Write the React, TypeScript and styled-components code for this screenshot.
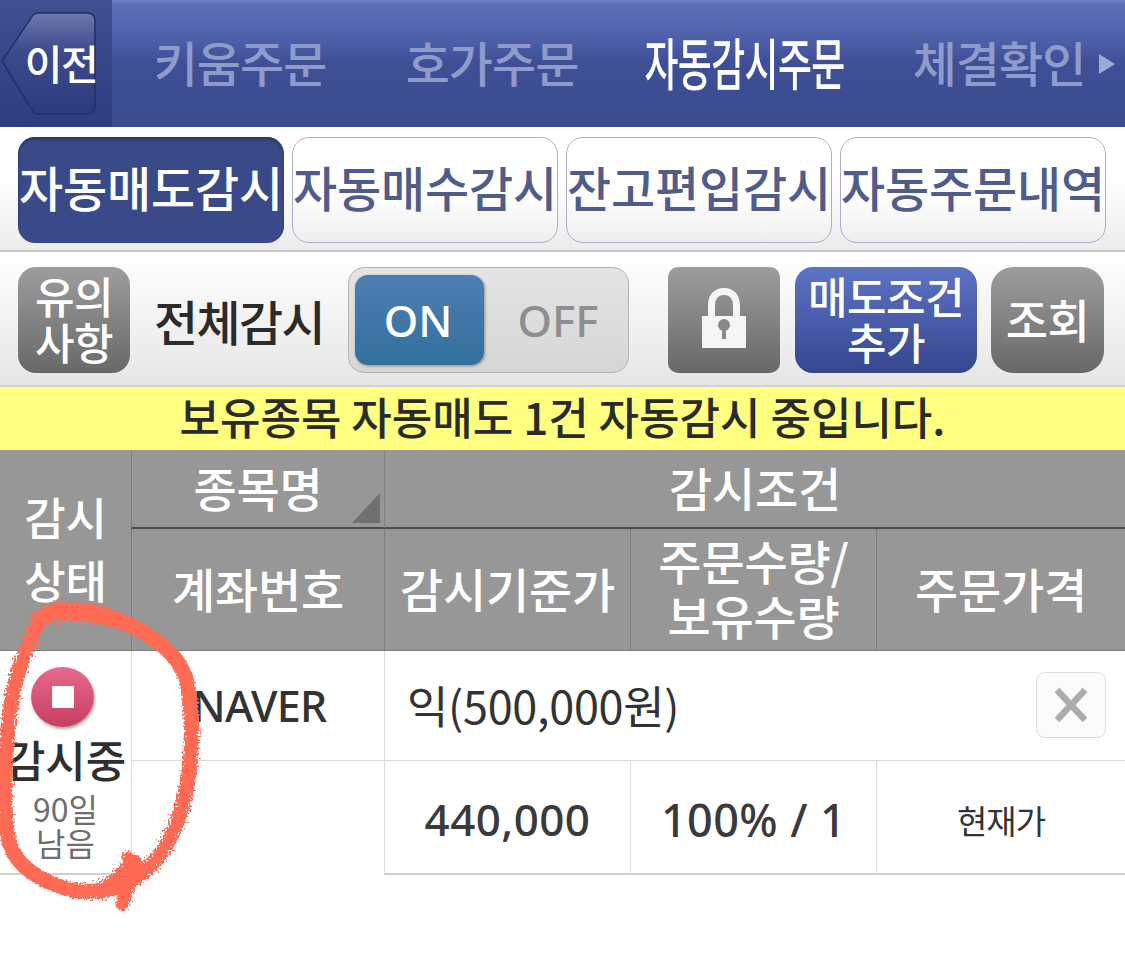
import React from 'react';
import styled, { createGlobalStyle } from 'styled-components';

const Global = createGlobalStyle`
  html, body { margin: 0; padding: 0; background: #fff; }
  body { width: 1125px; height: 954px; overflow: hidden; font-family: "Noto Sans CJK KR", "Noto Sans", sans-serif; }
`;
const Page = styled.div`position: relative; width: 1125px; height: 954px; background: #fff;`;

const Nav = styled.header`
  height: 127px; display: flex; align-items: stretch;
  background: linear-gradient(#6d7fc0 0, #6d7fc0 2px, #5f70b9 3px, #4d5fa9 40px, #3e4f96 62px, #3c4b8f 127px);
`;
const BackZone = styled.div`
  width: 112px; flex: none; display: flex; align-items: center; justify-content: center;
  position: relative;
  background: linear-gradient(#3f4f92, #2f3d80);
`;
const BackShape = styled.svg`position: absolute; left: 0; top: 11px;`;
const BackLabel = styled.span`
  position: relative; margin-left: 10px; margin-top: -3px; color: #fff; font-size: 41px; font-weight: 500; letter-spacing: -1.5px;
`;
const NavTabs = styled.div`flex: 1; display: flex; align-items: center; padding-bottom: 5px;`;
const NavTab = styled.span<{ $w: number; $ml?: number }>`
  width: ${p => p.$w}px; flex: none; display: flex; justify-content: center;
  margin-left: ${p => p.$ml ?? 0}px;
  font-size: 48px; font-weight: 500; letter-spacing: -1px;
  color: #8e9bcb;
  white-space: nowrap;
`;
const NavActive = styled.span`
  flex: none; color: #fff; font-size: 56px; font-weight: 500; letter-spacing: -1px; line-height: 60px;
  transform: scaleX(0.66); white-space: nowrap;
`;
const NavArrow = styled.svg`margin-left: 4px; margin-top: 5px; flex: none;`;

const Segments = styled.nav`
  height: 125px; box-sizing: border-box; padding: 10px 18px 0; display: flex; gap: 8px;
  background: linear-gradient(#fff 40%, #ececec);
  border-bottom: 2px solid #c9c9c9;
`;
const Segment = styled.div<{ $on?: boolean }>`
  width: 266px; height: 106px; box-sizing: border-box; display: flex; align-items: center; justify-content: center;
  border-radius: 17px; white-space: nowrap;
  font-size: 48px; font-weight: 500; letter-spacing: -0.2px; padding-bottom: 8px;
  color: ${p => (p.$on ? '#fff' : '#505c8a')};
  background: ${p => (p.$on ? '#3a4988' : 'linear-gradient(#fff 55%, #eeeeee)')};
  border: ${p => (p.$on ? 'none' : '1.5px solid #a8aed0')};
  box-shadow: ${p => (p.$on ? 'inset 0 2px 3px #2a3566' : 'none')};
`;

const Toolbar = styled.section`
  height: 135px; box-sizing: border-box; padding: 15px 21px 0 18px; display: flex; align-items: flex-start;
  background: linear-gradient(#fff, #e6e6e6);
  border-bottom: 2px solid #cfcfcf;
`;
const Square = styled.button<{ $w: number; $tone: 'gray' | 'blue'; $r?: number; $ml?: number; $size?: number }>`
  width: ${p => p.$w}px; height: 106px; padding: 0 0 4px; border: none; flex: none;
  margin-left: ${p => p.$ml ?? 0}px;
  border-radius: ${p => p.$r ?? 15}px; color: #fff; font-family: inherit; font-weight: 500;
  font-size: ${p => p.$size ?? 43}px; line-height: 46px; letter-spacing: -0.5px;
  display: flex; align-items: center; justify-content: center; text-align: center;
  background: ${p => (p.$tone === 'blue' ? 'linear-gradient(#5d73c4, #36468f)' : 'linear-gradient(#9d9d9d, #686868)')};
`;
const ToolLabel = styled.span`
  width: 218px; flex: none; text-align: center; line-height: 106px; height: 106px;
  font-size: 48px; font-weight: 500; letter-spacing: -1.6px; color: #2b2b2b; white-space: nowrap;
`;
const Toggle = styled.div`
  width: 281px; height: 106px; flex: none; box-sizing: border-box; padding: 7px 6px; display: flex; align-items: stretch;
  border: 1.5px solid #b4b4b4; border-radius: 16px; background: linear-gradient(#e4e4e4, #d6d6d6);
`;
const ToggleOn = styled.div`
  width: 129px; display: flex; align-items: center; justify-content: center; padding-bottom: 1px; padding-right: 3px; box-sizing: border-box;
  border-radius: 13px; background: linear-gradient(#4e7fb3, #326f9b); color: #fff;
  font-family: "Noto Sans", sans-serif; font-size: 44px; font-weight: 500;
  box-shadow: 1px 1px 3px #8c8c8c;
`;
const ToggleOff = styled.div`
  flex: 1; display: flex; align-items: center; justify-content: center; padding-bottom: 1px; padding-left: 10px;
  color: #8e8e8e; font-family: "Noto Sans", sans-serif; font-size: 44px; font-weight: 500;
`;

const Notice = styled.div`
  height: 63px; background: #ffff80; color: #2b2b2b; display: flex; align-items: center; justify-content: center;
  font-size: 44px; font-weight: 500; padding-bottom: 6px; box-sizing: border-box; white-space: nowrap;
`;

const Table = styled.div`
  display: grid;
  grid-template-columns: 131px 253px 246px 246px 249px;
  grid-template-rows: 79px 122px 110px 114px;
`;
const Head = styled.div<{ $area: string; $line?: boolean }>`
  grid-area: ${p => p.$area}; position: relative; box-sizing: border-box;
  display: flex; align-items: center; justify-content: center; text-align: center;
  background: #979797; color: #fff; font-size: 47px; font-weight: 500; letter-spacing: -0.2px;
  line-height: 55px;
  border-left: 1px solid #7f7f7f;
  border-bottom: ${p => (p.$line ? '2px solid #4a4a4a' : '1px solid #7d7d7d')};
  padding-bottom: 5px;
`;
const StatusHead = styled(Head)`border-left: none; line-height: 63px; padding-bottom: 4px; font-size: 45px;`;
const SortMark = styled.svg`position: absolute; right: 3px; bottom: 3px;`;

const Cell = styled.div<{ $area: string; $left?: boolean; $bottom?: boolean }>`
  grid-area: ${p => p.$area}; box-sizing: border-box; position: relative;
  display: flex; align-items: center; justify-content: ${p => (p.$left ? 'flex-start' : 'center')};
  color: #333; font-weight: 400; white-space: nowrap;
  border-left: 1px solid #dcdcdc;
  border-bottom: ${p => (p.$bottom ? '2px solid #cfcfcf' : 'none')};
`;
const DividedCell = styled(Cell)`border-bottom: 1.5px solid #dcdcdc;`;
const StatusCell = styled(Cell)`flex-direction: column; justify-content: flex-start; border-left: none; padding-top: 16px;`;
const StopDot = styled.div`
  width: 63px; height: 60px; border-radius: 50%; display: flex; align-items: center; justify-content: center;
  background: linear-gradient(#e76a8c, #c73e63); box-shadow: 1px 2px 3px #a8a8a8; flex: none; margin-right: 6px;
`;
const StopSquare = styled.div`width: 22px; height: 22px; background: #fff; border-radius: 1px;`;
const StatusName = styled.div`font-size: 44px; font-weight: 500; line-height: 44px; margin-top: 10px; letter-spacing: -0.2px; color: #2f2f2f;`;
const Remaining = styled.div`font-size: 32px; line-height: 34px; color: #6e6e6e; text-align: center; margin-top: 10px; white-space: normal; width: 90px;`;
const ConditionText = styled.span`padding-left: 22px; font-size: 45px; letter-spacing: -0.3px; padding-bottom: 2px;`;
const RemoveBtn = styled.button`
  position: absolute; right: 19px; top: 21px; width: 70px; height: 66px; padding: 0; display: flex; align-items: center; justify-content: center;
  border: 1.5px solid #dcdcdc; border-radius: 9px; background: #fbfbfb;
`;
const Figure = styled.span<{ $size: number }>`font-size: ${p => p.$size}px; letter-spacing: 0.4px; font-family: "Noto Sans", sans-serif; font-weight: 500; color: #3a3a3a; padding-top: 4px;`;
const SmallText = styled.span`font-size: 33px; color: #333; letter-spacing: -1px; padding-top: 6px;`;
const Naver = styled.span`font-family: "Noto Sans", sans-serif; font-size: 43px; font-weight: 500; color: #333; letter-spacing: -0.6px; padding-left: 3px;`;
const Scribble = styled.svg`position: absolute; left: 0; top: 590px; pointer-events: none;`;

export default function App() {
  return (
    <Page>
      <Global />
      <Nav>
        <BackZone>
          <BackShape width="106" height="106" viewBox="0 0 106 106">
            <defs>
              <linearGradient id="bk" x1="0" y1="0" x2="0" y2="1">
                <stop offset="0" stopColor="#6c78ad" />
                <stop offset="0.38" stopColor="#3d4b8d" />
                <stop offset="1" stopColor="#2d3a80" />
              </linearGradient>
            </defs>
            <path d="M2 50 L33 4 Q35 2 38 2 H87 Q95 2 95 10 V94 Q95 103 87 103 H38 Q34 103 32 99 Z" fill="url(#bk)" stroke="#232e66" strokeWidth="1.5" />
          </BackShape>
          <BackLabel>이전</BackLabel>
        </BackZone>
        <NavTabs>
          <NavTab $w={256}>키움주문</NavTab>
          <NavTab $w={248}>호가주문</NavTab>
          <NavTab $w={258}><NavActive>자동감시주문</NavActive></NavTab>
          <NavTab $w={190} $ml={30}>체결확인</NavTab>
          <NavArrow width="18" height="24" viewBox="0 0 18 24"><path d="M1 2 L17 12 L1 22 Z" fill="#9ea9d4" /></NavArrow>
        </NavTabs>
      </Nav>

      <Segments>
        <Segment $on>자동매도감시</Segment>
        <Segment>자동매수감시</Segment>
        <Segment>잔고편입감시</Segment>
        <Segment>자동주문내역</Segment>
      </Segments>

      <Toolbar>
        <Square $w={112} $tone="gray" $r={18}>유의<br />사항</Square>
        <ToolLabel>전체감시</ToolLabel>
        <Toggle>
          <ToggleOn>ON</ToggleOn>
          <ToggleOff>OFF</ToggleOff>
        </Toggle>
        <Square $w={112} $tone="gray" $r={10} $ml={39}>
          <svg width="44" height="60" viewBox="0 0 44 60">
            <path d="M0 28 H6 V17 C6 7 12 0 22 0 C32 0 38 7 38 17 V28 H44 V60 H0 Z M13 28 H31 V18 C31 11 28 7 22 7 C16 7 13 11 13 18 Z" fill="#f5f5f5" fillRule="evenodd" />
            <circle cx="22" cy="37" r="6" fill="#8a8a8a" />
            <rect x="20" y="40" width="4" height="11" fill="#8a8a8a" />
          </svg>
        </Square>
        <Square $w={182} $tone="blue" $r={18} $ml={15}>매도조건<br />추가</Square>
        <Square $w={113} $tone="gray" $r={22} $ml={14} $size={46}>조회</Square>
      </Toolbar>

      <Notice>보유종목 자동매도 1건 자동감시 중입니다.</Notice>

      <Table>
        <StatusHead $area="1 / 1 / 3 / 2">감시<br />상태</StatusHead>
        <Head $area="1 / 2 / 2 / 3" $line>
          종목명
          <SortMark width="30" height="32" viewBox="0 0 30 32"><path d="M29 1 V31 H1 Z" fill="#707070" /></SortMark>
        </Head>
        <Head $area="1 / 3 / 2 / 6" $line>감시조건</Head>
        <Head $area="2 / 2 / 3 / 3">계좌번호</Head>
        <Head $area="2 / 3 / 3 / 4">감시기준가</Head>
        <Head $area="2 / 4 / 3 / 5">주문수량/<br />보유수량</Head>
        <Head $area="2 / 5 / 3 / 6">주문가격</Head>

        <StatusCell $area="3 / 1 / 5 / 2" $bottom>
          <StopDot><StopSquare /></StopDot>
          <StatusName>감시중</StatusName>
          <Remaining>90일<br />남음</Remaining>
        </StatusCell>
        <DividedCell $area="3 / 2 / 4 / 3"><Naver>NAVER</Naver></DividedCell>
        <DividedCell $area="3 / 3 / 4 / 6" $left>
          <ConditionText>익(500,000원)</ConditionText>
          <RemoveBtn aria-label="삭제">
            <svg width="36" height="36" viewBox="0 0 36 36"><path d="M4 3 L32 33 M32 3 L4 33" stroke="#acacac" strokeWidth="6.5" /></svg>
          </RemoveBtn>
        </DividedCell>
        <Cell $area="4 / 2 / 5 / 3" />
        <Cell $area="4 / 3 / 5 / 4" $bottom><Figure $size={44}>440,000</Figure></Cell>
        <Cell $area="4 / 4 / 5 / 5" $bottom><Figure $size={45}>100% / 1</Figure></Cell>
        <Cell $area="4 / 5 / 5 / 6" $bottom><SmallText>현재가</SmallText></Cell>
      </Table>

      <Scribble width="220" height="330" viewBox="0 0 220 330">
        <defs>
          <filter id="rough" x="-10%" y="-10%" width="120%" height="120%">
            <feTurbulence type="fractalNoise" baseFrequency="0.5" numOctaves="2" seed="4" />
            <feDisplacementMap in="SourceGraphic" scale="11" />
          </filter>
        </defs>
        <g filter="url(#rough)" fill="none" stroke="#ff6a55" strokeLinecap="round" strokeLinejoin="round">
          <path strokeWidth="15" d="M24 66 C16 84 10 110 7 150 C4 190 3 225 9 252 C16 276 40 292 72 300 C100 305 128 298 150 276 C170 256 182 226 188 190 C194 150 192 114 186 88 C176 60 148 42 112 27 C90 20 64 16 50 22 C38 30 30 48 24 66" />
          <path strokeWidth="16" d="M40 28 C60 18 92 22 118 32" />
          <path strokeWidth="13" d="M128 268 C134 282 128 300 122 314" />
          <path strokeWidth="16" d="M134 272 C124 284 114 294 100 300" />
        </g>
      </Scribble>
    </Page>
  );
}
